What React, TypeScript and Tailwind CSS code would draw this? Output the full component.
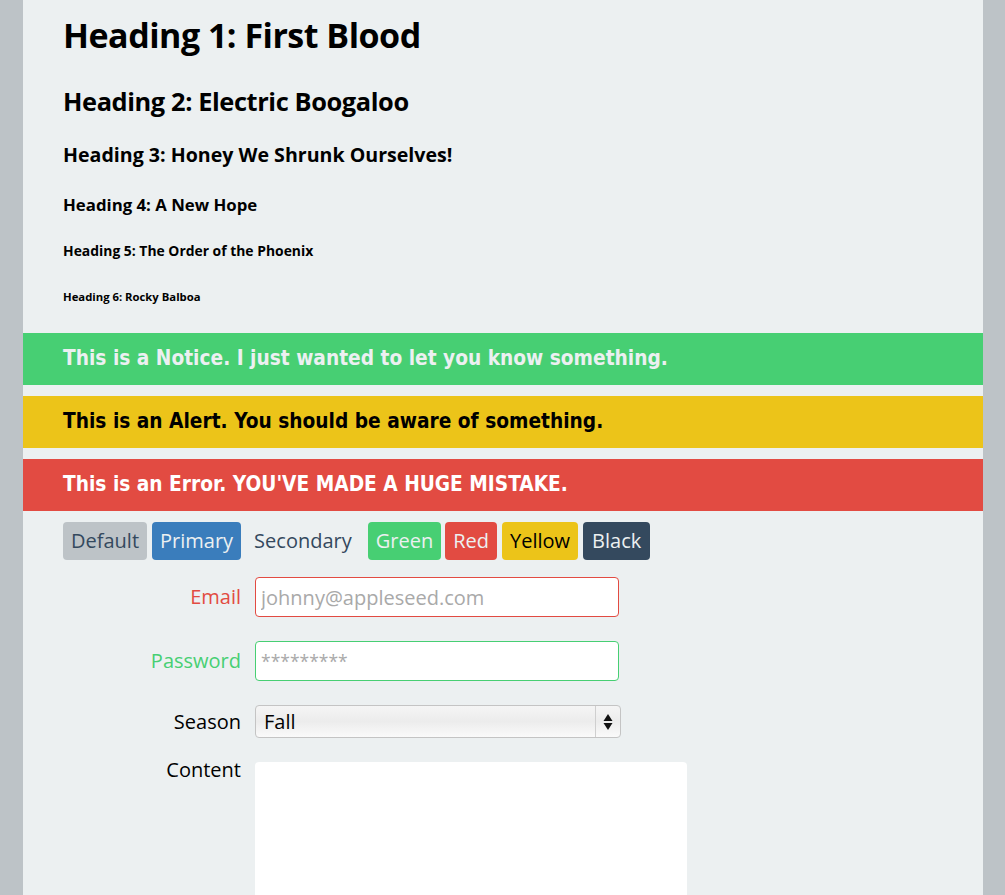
import React from "react";

export default function App() {
  const f = { fontFamily: '"Open Sans", "Noto Sans", sans-serif' };
  return (
    <div className="min-h-[895px] bg-[#bdc3c7]" style={f}>
      <div className="w-[960px] bg-[#ecf0f1] min-h-[895px] ml-[23px] pb-10">
        <div className="px-10 pt-[13px] text-black">
          <h1 className="text-[34px] font-bold leading-[44px] tracking-[-0.5px]">Heading 1: First Blood</h1>
          <h2 className="mt-[28px] text-[25.4px] font-bold leading-[32px] tracking-[-0.4px]">Heading 2: Electric Boogaloo</h2>
          <h3 className="mt-[25px] text-[19.6px] font-bold leading-[26px]">Heading 3: Honey We Shrunk Ourselves!</h3>
          <h4 className="mt-[26px] text-[16.8px] font-bold leading-[22px]">Heading 4: A New Hope</h4>
          <h5 className="mt-[26px] text-[13.9px] font-bold leading-[18px]">Heading 5: The Order of the Phoenix</h5>
          <h6 className="mt-[29px] text-[11.3px] font-bold leading-[16px]">Heading 6: Rocky Balboa</h6>
        </div>
        <div className="mt-[28px] flex flex-col gap-[11px]" style={{ fontFamily: '"DejaVu Sans Condensed", "DejaVu Sans", sans-serif' }}>
          <div className="h-[52px] bg-[#47cf73] px-10 flex items-center text-[20.7px] font-bold text-[#ecf0f1]">This is a Notice. I just wanted to let you know something.</div>
          <div className="h-[52px] bg-[#ecc419] px-10 flex items-center text-[20.7px] font-bold text-black">This is an Alert. You should be aware of something.</div>
          <div className="h-[52px] bg-[#e24b42] px-10 flex items-center text-[20.7px] font-bold text-white">This is an Error. YOU'VE MADE A HUGE MISTAKE.</div>
        </div>
        <div className="px-10 mt-[11px] flex items-center gap-[5px] text-[20px]">
          <button className="h-[38px] px-[8px] rounded-[4px] bg-[#bdc3c7] text-[#34495e]">Default</button>
          <button className="h-[38px] px-[8px] rounded-[4px] bg-[#3a7dbc] text-[#ecf0f1]">Primary</button>
          <button className="h-[38px] pl-[8px] pr-[11px] rounded-[4px] text-[#34495e]">Secondary</button>
          <button className="h-[38px] px-[8px] rounded-[4px] bg-[#47cf73] text-[#ecf0f1]">Green</button>
          <button className="h-[38px] px-[8px] rounded-[4px] bg-[#e24b42] text-[#ecf0f1] -ml-[1px]">Red</button>
          <button className="h-[38px] px-[8px] rounded-[4px] bg-[#ecc419] text-black">Yellow</button>
          <button className="h-[38px] px-[9px] rounded-[4px] bg-[#34495e] text-[#ecf0f1]">Black</button>
        </div>
        <div className="mt-[17px] flex flex-col text-[20px]">
          <div className="flex items-center">
            <label className="w-[232px] text-right pr-[14px] text-[#e24b42]">Email</label>
            <input className="w-[364px] h-[40px] rounded-[4px] border border-[#e24b42] bg-white px-[5px] text-[20px] placeholder:text-[#a9a9a9] outline-none" placeholder="johnny@appleseed.com" />
          </div>
          <div className="flex items-center mt-[24px]">
            <label className="w-[232px] text-right pr-[14px] text-[#47cf73]">Password</label>
            <input type="password" className="w-[364px] h-[40px] rounded-[4px] border border-[#47cf73] bg-white px-[5px] text-[17.5px] placeholder:text-[#a9a9a9] outline-none" placeholder="*********" />
          </div>
          <div className="flex items-center mt-[24px]">
            <label className="w-[232px] text-right pr-[14px] text-black">Season</label>
            <div className="w-[366px] h-[33px] rounded-[4px] border border-[#c4c4c4] bg-gradient-to-b from-[#f5f5f5] via-[#ececec] to-[#fafafa] flex items-center">
              <span className="pl-[8px] text-black flex-1">Fall</span>
              <div className="w-[25px] h-full border-l border-[#cfcfcf] flex items-center justify-center">
                <svg width="10" height="18" viewBox="0 0 10 18"><path d="M5 1 L9.5 8 L0.5 8 Z" fill="#111" /><path d="M5 17 L9.5 10 L0.5 10 Z" fill="#111" /></svg>
              </div>
            </div>
          </div>
          <div className="flex items-start mt-[24px]">
            <label className="w-[232px] text-right pr-[14px] text-black leading-[16px]">Content</label>
            <textarea className="w-[432px] h-[200px] rounded-[4px] bg-white outline-none resize-none" />
          </div>
        </div>
      </div>
    </div>
  );
}
